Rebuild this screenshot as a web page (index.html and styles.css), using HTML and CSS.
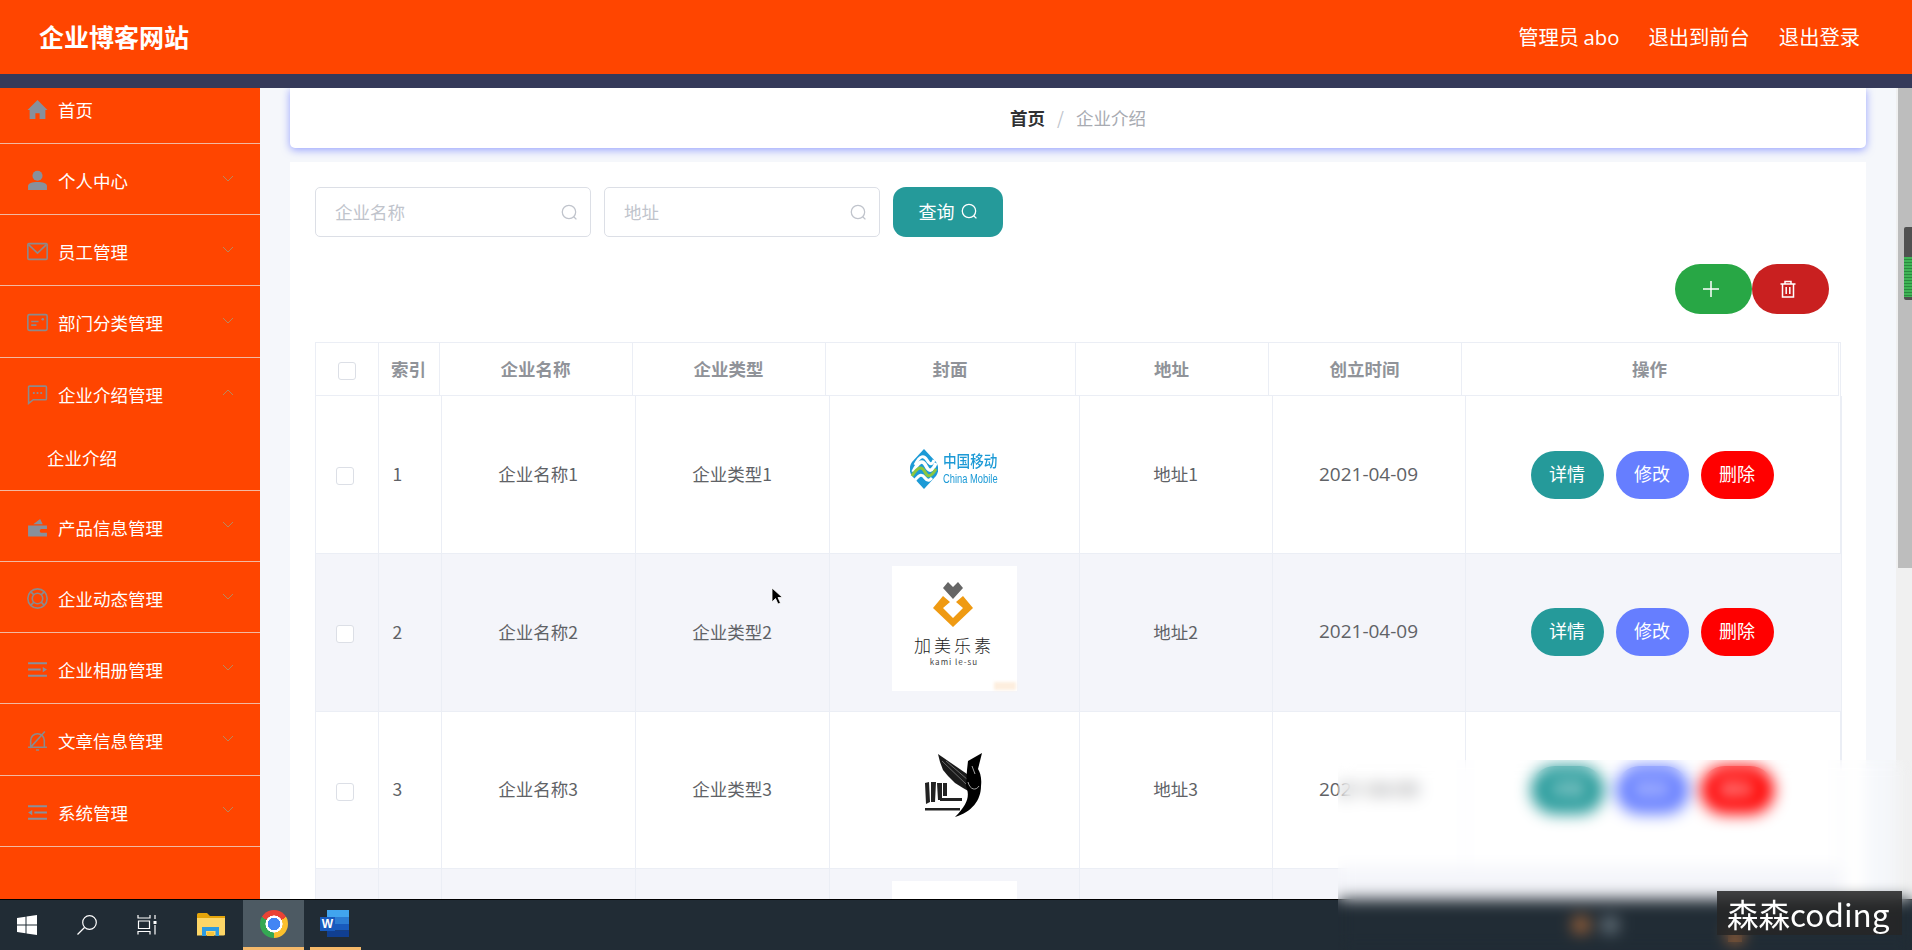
FILE: index.html
```html
<!DOCTYPE html>
<html lang="zh-CN">
<head>
  <meta charset="UTF-8" />
  <meta name="viewport" content="width=device-width, initial-scale=1.0"/>
  <title>企业博客网站</title>
  <link rel="stylesheet" href="styles.css">
</head>
<body>

<div class="app">
  <header class="topbar">
    <div class="brand">企业博客网站</div>
    <nav class="top-links">
      <a>管理员 <span class="admin-name">abo</span></a>
      <a>退出到前台</a>
      <a>退出登录</a>
    </nav>
  </header>
  <div class="strip"></div>

  <div class="workspace">
    <aside class="sidebar">
      <div class="menu-item first">
        <svg class="menu-icon" viewBox="0 0 20 20"><path class="solid" d="M10 1 .5 10.500H2.500V19H8V13.500H12V19H17.500V10.500H19.500Z"/></svg>
        <span>首页</span>
      </div>
      <div class="menu-item">
        <svg class="menu-icon" viewBox="0 0 20 20"><circle class="solid" cx="10" cy="5.500" r="4.800"/><path class="solid" d="M1 19V15.500C1 12.500 5 11.500 10 11.500S19 12.500 19 15.500V19Z"/></svg>
        <span>个人中心</span>
        <svg class="chevron" viewBox="0 0 12 7"><path d="M1 1 6 6 11 1"/></svg>
      </div>
      <div class="menu-item">
        <svg class="menu-icon" viewBox="0 0 20 20"><rect class="line" x=".8" y="2.500" width="18.400" height="15" rx="1"/><path class="line" d="M1.500 3.500 10 11.500 18.500 3.500"/></svg>
        <span>员工管理</span>
        <svg class="chevron" viewBox="0 0 12 7"><path d="M1 1 6 6 11 1"/></svg>
      </div>
      <div class="menu-item">
        <svg class="menu-icon" viewBox="0 0 20 20"><rect class="line" x=".8" y="2.500" width="18.400" height="15" rx="1.500"/><path class="line" d="M4 9H11M4 12.500H9"/><circle class="solid" cx="15" cy="7" r="1.200"/></svg>
        <span>部门分类管理</span>
        <svg class="chevron" viewBox="0 0 12 7"><path d="M1 1 6 6 11 1"/></svg>
      </div>
      <div class="menu-item open">
        <svg class="menu-icon" viewBox="0 0 20 20"><path class="line" d="M2.500 2H17.500A1 1 0 0 1 18.500 3V14A1 1 0 0 1 17.500 15H6L1.500 18.500V3A1 1 0 0 1 2.500 2Z"/><circle class="solid" cx="6.500" cy="8.500" r="1"/><circle class="solid" cx="10" cy="8.500" r="1"/><circle class="solid" cx="13.500" cy="8.500" r="1"/></svg>
        <span>企业介绍管理</span>
        <svg class="chevron" viewBox="0 0 12 7"><path d="M1 6 6 1 11 6"/></svg>
      </div>
      <div class="menu-sub">企业介绍</div>
      <div class="menu-item">
        <svg class="menu-icon" viewBox="0 0 20 20"><path class="solid" d="M1 8H19V11.500H13.500A1.800 1.800 0 0 0 13.500 15H19V18.500H1ZM6 7 12.500 2 15 7Z"/></svg>
        <span>产品信息管理</span>
        <svg class="chevron" viewBox="0 0 12 7"><path d="M1 1 6 6 11 1"/></svg>
      </div>
      <div class="menu-item">
        <svg class="menu-icon" viewBox="0 0 20 20"><circle class="line" cx="10" cy="10" r="9.200"/><circle class="line" cx="10" cy="10" r="5"/><path class="line" d="M3.500 3.500 6.500 6.500M16.500 3.500 13.500 6.500M3.500 16.500 6.500 13.500M16.500 16.500 13.500 13.500"/></svg>
        <span>企业动态管理</span>
        <svg class="chevron" viewBox="0 0 12 7"><path d="M1 1 6 6 11 1"/></svg>
      </div>
      <div class="menu-item">
        <svg class="menu-icon" viewBox="0 0 20 20"><path class="solid" d="M1 3H19V5H1ZM1 9H13V11H1ZM1 15H19V17H1ZM15 7.500 19 10 15 12.500Z"/></svg>
        <span>企业相册管理</span>
        <svg class="chevron" viewBox="0 0 12 7"><path d="M1 1 6 6 11 1"/></svg>
      </div>
      <div class="menu-item">
        <svg class="menu-icon" viewBox="0 0 20 20"><path class="line" d="M1 16.500H19M3.500 16.500V10A6.500 6.500 0 0 1 16.500 10V16.500M3 17 17 1.500M8.500 19H11.500"/></svg>
        <span>文章信息管理</span>
        <svg class="chevron" viewBox="0 0 12 7"><path d="M1 1 6 6 11 1"/></svg>
      </div>
      <div class="menu-item">
        <svg class="menu-icon" viewBox="0 0 20 20"><path class="solid" d="M1 3H19V5H1ZM7 9H19V11H7ZM1 15H19V17H1ZM5 7.500 1 10 5 12.500Z"/></svg>
        <span>系统管理</span>
        <svg class="chevron" viewBox="0 0 12 7"><path d="M1 1 6 6 11 1"/></svg>
      </div>
    </aside>

    <main class="content">
      <div class="crumb-card">
        <b>首页</b><i>/</i><span>企业介绍</span>
      </div>

      <section class="panel">
        <div class="search-row">
          <label class="search-box">
            <input type="text" placeholder="企业名称" />
            <svg class="search-icon" viewBox="0 0 16 16"><circle cx="7.500" cy="7.500" r="6.300"/><path d="M12 12 14.500 14.500"/></svg>
          </label>
          <label class="search-box">
            <input type="text" placeholder="地址" />
            <svg class="search-icon" viewBox="0 0 16 16"><circle cx="7.500" cy="7.500" r="6.300"/><path d="M12 12 14.500 14.500"/></svg>
          </label>
          <button class="query-btn">查询
            <svg class="search-icon white" viewBox="0 0 16 16"><circle cx="7.500" cy="7.500" r="6.300"/><path d="M12 12 14.500 14.500"/></svg>
          </button>
        </div>

        <div class="tool-row">
          <button class="tool-btn add">
            <svg viewBox="0 0 18 18"><path d="M9 1V17M1 9H17"/></svg>
          </button>
          <button class="tool-btn remove">
            <svg viewBox="0 0 18 18"><path d="M1.500 4H16.500M6 4V1.500H12V4M3.500 4V17H14.500V4M7.200 7V14M10.800 7V14"/></svg>
          </button>
        </div>

        <div class="grid-wrap">
          <table class="grid head">
            <colgroup>
              <col class="h1"><col class="h2"><col class="h3"><col class="h3"><col class="h5"><col class="h3"><col class="h3"><col class="h8">
            </colgroup>
            <tr>
              <th><span class="check"></span></th>
              <th>索引</th><th>企业名称</th><th>企业类型</th><th>封面</th><th>地址</th><th>创立时间</th><th>操作</th>
            </tr>
          </table>
          <table class="grid body">
            <colgroup>
              <col class="b1"><col class="b2"><col class="b4"><col class="b4"><col class="b5"><col class="b3"><col class="b3"><col class="b8">
            </colgroup>
            <tr>
              <td><span class="check"></span></td>
              <td class="num">1</td><td>企业名称1</td><td>企业类型1</td>
              <td class="cover-cell">
                <div class="cover mobile">
                  <svg class="mobile-mark" viewBox="0 0 28 42">
                    <path d="M14 1 26 14C29 18 29 24 26 28L14 41 2 28C-1 24-1 18 2 14Z" fill="#1c9ad6"/>
                    <path d="M3 24C9 12 13 12 16 18S22 24 26 15" fill="none" stroke="#fff" stroke-width="3.500"/>
                    <path d="M2 28C8 18 12 18 15 24S21 29 26 21" fill="none" stroke="#8cc63f" stroke-width="3"/>
                    <path d="M5 17C10 7 14 7 17 12S22 17 24 12" fill="none" stroke="#fff" stroke-width="3"/>
                    <path d="M5 32C10 26 12 26 15 30S20 32 22 30" fill="none" stroke="#fff" stroke-width="3"/>
                  </svg>
                  <div class="mobile-name"><strong>中国移动</strong><em>China Mobile</em></div>
                </div>
              </td>
              <td>地址1</td><td class="date">2021-04-09</td>
              <td class="action-cell"><div class="row-actions"><button class="pill teal">详情</button><button class="pill blue">修改</button><button class="pill red">删除</button></div></td>
            </tr>
            <tr class="striped">
              <td><span class="check"></span></td>
              <td class="num">2</td><td>企业名称2</td><td>企业类型2</td>
              <td class="cover-cell">
                <div class="cover jiamei">
                  <svg class="jiamei-mark" viewBox="0 0 125 62">
                    <path d="M51 30 41 42 61 61 81 42 71 30 64 36 71 42 61 52 51 42 58 36Z" fill="#ef9a12"/>
                    <path d="M51 22 56 16 61 21 66 16 71 22 61 33Z" fill="#666"/>
                  </svg>
                  <div class="jiamei-name">加美乐素</div>
                  <div class="jiamei-sub">kami le-su</div>
                  <span class="jiamei-stamp"></span>
                </div>
              </td>
              <td>地址2</td><td class="date">2021-04-09</td>
              <td class="action-cell"><div class="row-actions"><button class="pill teal">详情</button><button class="pill blue">修改</button><button class="pill red">删除</button></div></td>
            </tr>
            <tr>
              <td><span class="check"></span></td>
              <td class="num">3</td><td>企业名称3</td><td>企业类型3</td>
              <td class="cover-cell">
                <div class="cover">
                  <svg class="bird" viewBox="0 0 125 125">
                    <path d="M46 30 75 50 78 68 71 64 63 59 56 52 51 46 48 38Z" fill="#1a1a1a"/>
                    <path d="M50 37 74 60M54 37 76 56" stroke="#fff" stroke-width=".35"/>
                    <path d="M90 29 76 37 75 46 74 62C78 72 76 80 63 93 80 88 89 76 89 62 90 54 88 48 86 45Z" fill="#000"/>
                    <path d="M76 58C78 66 84 67 87 62M80 42 83 50" fill="none" stroke="#ccc" stroke-width=".8"/>
                    <path d="M33 59 37 58 38 78 34 80ZM39 58H44L43 78H39ZM45 59H50V76H46ZM51 59H55V72H51ZM48 74H70V77H48ZM33 84H68V86.500H33Z" fill="#222"/>
                  </svg>
                </div>
              </td>
              <td>地址3</td><td class="date">2021-04-09</td>
              <td class="action-cell"><div class="row-actions"><button class="pill teal">详情</button><button class="pill blue">修改</button><button class="pill red">删除</button></div></td>
            </tr>
            <tr class="striped">
              <td></td><td></td><td></td><td></td>
              <td class="cover-cell"><div class="cover"></div></td>
              <td></td><td></td><td></td>
            </tr>
          </table>
        </div>
      </section>
    </main>

    <div class="scrollbar">
      <div class="scroll-thumb"></div>
      <div class="volume"><span></span></div>
    </div>
  </div>

  <footer class="taskbar">
    <div class="tb-slot start">
      <svg class="tb-icon" viewBox="0 0 20 20"><path d="M0 3 8.500 1.800V9.500H0ZM9.500 1.600 20 0V9.500H9.500ZM0 10.500H8.500V18.200L0 17ZM9.500 10.500H20V20L9.500 18.400Z" fill="#fff"/></svg>
    </div>
    <div class="tb-slot find">
      <svg class="tb-icon" viewBox="0 0 20 20"><circle cx="12.500" cy="7.500" r="6.800" fill="none" stroke="#fff" stroke-width="1.200"/><path d="M7.500 12.500 .5 19.500" stroke="#fff" stroke-width="1.300"/></svg>
    </div>
    <div class="tb-slot tasks">
      <svg class="tb-icon" viewBox="0 0 20 20"><path d="M1 0V3H13V0M1.500 6H12.500V13.500H1.500ZM1 19.500V16.500H13V19.500M18 0V4M18 10V19.500" fill="none" stroke="#fff" stroke-width="1.200"/><rect x="16.500" y="6" width="3" height="3" fill="#fff"/></svg>
    </div>
    <div class="tb-slot folder">
      <svg class="tb-folder" viewBox="0 0 28 24"><path d="M0 1.500A1.500 1.500 0 0 1 1.500 0H10L13 3H28V22H0Z" fill="#e5a50a"/><path d="M0 5H28V21A1.500 1.500 0 0 1 26.500 22.500H0Z" fill="#fdd667"/><path d="M5 14H22V23H18.500V18H9V23H5Z" fill="#2e9be0"/><rect x="10" y="19" width="7" height="4" fill="#f5c33b"/></svg>
    </div>
    <div class="tb-slot browser"><span class="chrome"></span></div>
    <div class="tb-slot word">
      <svg class="tb-word" viewBox="0 0 22 27"><rect width="22" height="7" fill="#41a5ee"/><rect y="7" width="22" height="7" fill="#2b7cd3"/><rect y="14" width="22" height="6.500" fill="#185abd"/><rect y="20.500" width="22" height="6.500" fill="#103f91"/></svg>
      <span class="word-w">W</span>
    </div>
    <div class="tray">
      <span class="tray-dot orange"></span>
      <span class="tray-dot grey"></span>
      <span class="tray-dot orange far"></span>
    </div>
  </footer>
</div>

<!-- mouse pointer from the recording -->
<svg class="pointer" viewBox="0 0 12 18"><path d="M1 1V15L4.500 11.500 7 17 9.500 16 7 10.500H11.500Z" fill="#000" stroke="#fff" stroke-width=".8"/></svg>

<!-- blurred corner and channel label on top of the recording -->
<div class="blur-patch"></div>
<div class="channel-tag">森森coding</div>

</body>
</html>
```

FILE: styles.css
```css
html, body {
  margin: 0;
  padding: 0;
  height: 100%;
  overflow: hidden;
  font-family: "Noto Sans CJK SC", "Noto Sans", sans-serif;
  color: #606266;
  background: #f5f7fb;
}

button {
  border: none;
  cursor: pointer;
  font-family: inherit;
  padding: 0;
}

.app {
  display: flex;
  flex-direction: column;
  height: 950px;
}

.topbar {
  display: flex;
  justify-content: space-between;
  align-items: center;
  box-sizing: border-box;
  height: 74px;
  flex: none;
  padding: 0 52px 2px 39px;
  background: #ff4500;
  color: #fff;
}

.brand {
  font-size: 25px;
  font-weight: bold;
}

.top-links {
  display: flex;
  gap: 29px;
  font-size: 20.3px;
}

.admin-name {
  font-family: "Open Sans", sans-serif;
  font-weight: 500;
}

.strip {
  height: 14px;
  flex: none;
  background: #353a5a;
}

.workspace {
  display: flex;
  flex: 1;
  min-height: 0;
}

/* sidebar */
.sidebar {
  width: 260px;
  flex: none;
  background: #ff4500;
  color: #fff;
  font-size: 17.5px;
}

.menu-item {
  display: flex;
  align-items: center;
  box-sizing: border-box;
  height: 71.2px;
  padding: 3px 26px 0 28px;
  border-bottom: 1px solid #f2b9a2;
}

.menu-item.first {
  height: 56px;
  padding-top: 0;
  padding-bottom: 13px;
}

.menu-item.open {
  border-bottom: none;
}

.menu-item span {
  flex: 1;
  margin-left: 10px;
}

.menu-icon {
  width: 21px;
  height: 21px;
  margin-left: -1px;
  flex: none;
}

.menu-icon .solid {
  fill: #88909c;
}

.menu-icon .line {
  fill: none;
  stroke: #8c8a8c;
  stroke-width: 1.500;
}

.chevron {
  width: 12px;
  height: 7px;
  margin-top: -5px;
  fill: none;
  stroke: #b6895f;
  stroke-width: 1;
}

.menu-sub {
  display: flex;
  align-items: center;
  box-sizing: border-box;
  height: 62px;
  padding-left: 47px;
  padding-bottom: 3px;
  border-bottom: 1px solid #f2b9a2;
}

/* main column */
.content {
  flex: 1;
  min-width: 0;
  padding: 0 30px;
  overflow: hidden;
}

.crumb-card {
  display: flex;
  justify-content: center;
  align-items: center;
  box-sizing: border-box;
  height: 60px;
  padding-bottom: 2px;
  background: #fff;
  border-radius: 0 0 5px 5px;
  box-shadow: 0 2px 9px rgba(100, 115, 255, 0.65);
  font-size: 17.5px;
  color: #a8abb2;
}

.crumb-card b {
  color: #303133;
}

.crumb-card i {
  margin: 0 12px;
  font-style: normal;
  color: #c0c4cc;
}

.panel {
  margin-top: 14px;
  padding: 25px;
  background: #fff;
}

.search-row {
  display: flex;
  gap: 13px;
}

.search-box {
  display: flex;
  align-items: center;
  box-sizing: border-box;
  width: 276px;
  height: 50px;
  padding: 0 12px 0 19px;
  background: #fff;
  border: 1px solid #dcdfe6;
  border-radius: 5px;
}

.search-box input {
  flex: 1;
  min-width: 0;
  border: none;
  outline: none;
  padding: 0 0 2px;
  font-family: inherit;
  font-size: 17.5px;
  color: #606266;
}

.search-box input::placeholder {
  color: #c0c4cc;
}

.search-icon {
  width: 17px;
  height: 17px;
  flex: none;
  fill: none;
  stroke: #c0c4cc;
  stroke-width: 1.200;
}

.search-icon.white {
  stroke: #fff;
}

.query-btn {
  display: flex;
  justify-content: center;
  align-items: center;
  gap: 6px;
  width: 110px;
  height: 50px;
  padding-bottom: 2px;
  border-radius: 13px;
  background: #259a9a;
  color: #fff;
  font-size: 18px;
}

.tool-row {
  display: flex;
  justify-content: flex-end;
  margin-top: 27px;
  padding-right: 12px;
}

.tool-btn {
  display: flex;
  justify-content: center;
  align-items: center;
  width: 77px;
  height: 50px;
  border-radius: 25px;
}

.tool-btn svg {
  width: 18px;
  height: 18px;
  margin-right: 6px;
  fill: none;
  stroke: #fff;
  stroke-width: 1.500;
}

.tool-btn.add {
  background: #28a745;
}

.tool-btn.remove {
  background: #c92020;
}

/* table */
.grid-wrap {
  width: 1526px;
  margin-top: 28px;
  border: 1px solid #ebeef5;
  border-bottom: none;
  box-sizing: border-box;
}

.grid {
  table-layout: fixed;
  border-collapse: collapse;
  font-size: 17.5px;
}

.grid.head {
  width: 1522px;
  height: 53px;
}

.grid.body {
  width: 1525px;
}

.h1, .b1 { width: 62px; }
.h2 { width: 61px; }
.b2 { width: 63px; }
.h3, .b3 { width: 193px; }
.b4 { width: 194px; }
.h5 { width: 250px; }
.b5 { width: 250px; }
.h8 { width: 377px; }
.b8 { width: 376px; }

.grid th {
  border: 1px solid #ebeef5;
  border-top: none;
  color: #909399;
  font-weight: bold;
  text-align: center;
  padding: 0 0 2px;
}

.grid th:first-child,
.grid td:first-child {
  border-left: none;
}

.grid td {
  box-sizing: border-box;
  height: 157.5px;
  padding: 0 0 2px;
  text-align: center;
  border-right: 1px solid #ebeef5;
  border-bottom: 1px solid #ebeef5;
}

.grid td.num {
  padding-left: 14px;
  text-align: left;
}

.grid td.date {
  font-family: "Open Sans", sans-serif;
  font-size: 19px;
}

.grid td.action-cell {
  padding-bottom: 0;
}

.striped td {
  background: #f4f5fa;
}

.check {
  display: inline-block;
  vertical-align: middle;
  box-sizing: border-box;
  width: 18px;
  height: 18px;
  background: #fff;
  border: 1px solid #dcdfe6;
  border-radius: 3px;
}

.grid td:first-child .check {
  margin-right: 4px;
}

.grid td.cover-cell {
  vertical-align: top;
  padding: 12px 0 0;
}

.cover {
  position: relative;
  width: 125px;
  height: 125px;
  margin: 0 auto;
  background: #fff;
}

.cover.mobile {
  display: flex;
  justify-content: center;
  align-items: center;
  gap: 5px;
  padding-bottom: 4px;
  box-sizing: border-box;
}

.mobile-mark {
  width: 28px;
  height: 42px;
}

.mobile-name {
  display: flex;
  flex-direction: column;
  width: 55px;
  text-align: left;
  color: #1c9ad6;
  line-height: 1;
  white-space: nowrap;
}

.mobile-name strong {
  margin-bottom: 3px;
  font-size: 16px;
  font-weight: 500;
  line-height: 18px;
  transform: scaleX(0.85);
  transform-origin: left;
}

.mobile-name em {
  font: 13px/14px "Liberation Sans", sans-serif;
  transform: scaleX(0.72);
  transform-origin: left;
}

.jiamei-mark {
  display: block;
  width: 125px;
  height: 62px;
}

.jiamei-name {
  margin-top: 5px;
  font-weight: 300;
  font-size: 17px;
  line-height: 24px;
  letter-spacing: 3px;
  color: #222;
}

.jiamei-sub {
  font-size: 8px;
  line-height: 10px;
  color: #444;
  letter-spacing: 1px;
}

.jiamei-stamp {
  position: absolute;
  right: 1px;
  bottom: 1px;
  width: 22px;
  height: 8px;
  background: #fdeede;
  filter: blur(1.5px);
}

.bird {
  display: block;
  width: 125px;
  height: 125px;
  filter: blur(0.4px);
}

.row-actions {
  display: flex;
  justify-content: center;
  gap: 12px;
  padding-right: 2px;
}

.pill {
  width: 73px;
  height: 48px;
  padding-bottom: 4px;
  border-radius: 24px;
  color: #fff;
  font-size: 18px;
}

.pill.teal { background: #259a9a; }
.pill.blue { background: #667eff; }
.pill.red { background: #ff0000; }

/* right scrollbar of the browser window */
.scrollbar {
  position: relative;
  width: 16px;
  flex: none;
  background: #f0f0f0;
}

.scroll-thumb {
  height: 480px;
  margin-left: 2px;
  background: #bdbdbd;
}

.volume {
  position: absolute;
  top: 139px;
  left: 8px;
  box-sizing: border-box;
  width: 8px;
  height: 73px;
  padding-top: 30px;
  background: #505050;
  border-radius: 2px 0 0 2px;
}

.volume span {
  display: block;
  height: 40px;
  background: repeating-linear-gradient(#3fb456 0 2px, #2a8a3f 2px 3px);
}

/* windows taskbar */
.taskbar {
  display: flex;
  height: 51px;
  flex: none;
  box-sizing: border-box;
  background: #212c35;
  border-top: 1px solid #000;
}

.tb-slot {
  display: flex;
  justify-content: center;
  align-items: center;
  flex: none;
  box-sizing: border-box;
  height: 50px;
}

.tb-icon {
  width: 20px;
  height: 20px;
}

.start { width: 54px; }
.find { width: 66px; }
.tasks { width: 54px; }

.folder {
  width: 69px;
  padding-left: 5px;
}

.tb-folder {
  width: 28px;
  height: 24px;
}

.browser {
  width: 61px;
  background: #4d5a63;
  border-bottom: 3px solid #f5b96a;
}

.chrome {
  width: 28px;
  height: 28px;
  border-radius: 50%;
  background:
    radial-gradient(circle closest-side, #4285f4 0 44%, #fff 46% 60%, transparent 62%),
    conic-gradient(from -60deg, #ea4335 0 120deg, #fbc02d 120deg 240deg, #34a853 240deg 360deg);
}

.word {
  position: relative;
  justify-content: flex-start;
  width: 51px;
  margin-left: 6px;
  padding-left: 17px;
  border-bottom: 3px solid #f5b96a;
}

.tb-word {
  width: 22px;
  height: 27px;
}

.word-w {
  position: absolute;
  left: 10px;
  top: 17px;
  width: 15px;
  height: 14px;
  background: #185abd;
  color: #fff;
  font: bold 12px/14px "Liberation Sans", sans-serif;
  text-align: center;
}

.tray {
  display: flex;
  align-items: center;
  margin-left: 1213px;
  gap: 15px;
}

.tray-dot {
  width: 14px;
  height: 14px;
}

.tray-dot.orange { background: #c9763a; }
.tray-dot.grey { background: #7d8a92; }
.tray-dot.far { margin-left: 96px; margin-top: 20px; }

/* overlays from the recording */
.pointer {
  position: absolute;
  left: 771px;
  top: 587px;
  width: 12px;
  height: 18px;
}

.blur-patch {
  position: absolute;
  left: 1338px;
  top: 760px;
  right: 0;
  bottom: 0;
  backdrop-filter: blur(8px);
}

.channel-tag {
  position: absolute;
  left: 1717px;
  top: 891px;
  width: 185px;
  height: 44px;
  box-sizing: border-box;
  padding-left: 10px;
  background: rgba(38, 38, 38, 0.85);
  color: #fff;
  font-size: 31.5px;
  line-height: 44px;
  white-space: nowrap;
}
```
